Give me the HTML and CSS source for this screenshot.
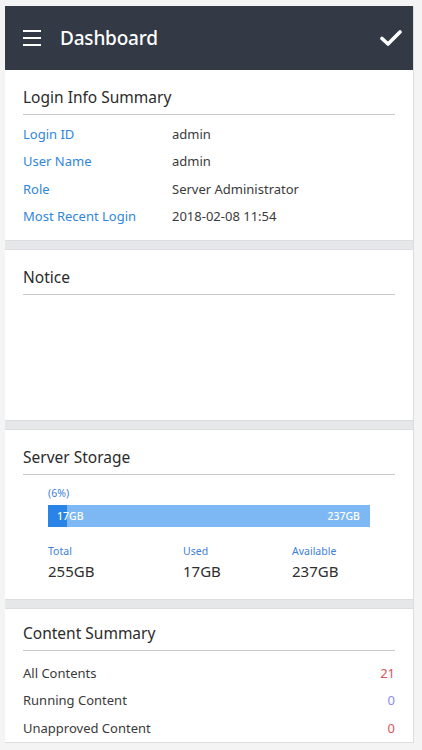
FILE: index.html
```html
<!DOCTYPE html>
<html>
<head>
<meta charset="utf-8">
<link rel="stylesheet" href="styles.css">
</head>
<body>
<div class="app">
  <header class="topbar">
    <div class="hamburger"><span></span><span></span><span></span></div>
    <h1 class="title">Dashboard</h1>
    <svg class="check" width="22" height="18" viewBox="0 0 22 18"><path d="M2 9.5 L8 15 L20 3" fill="none" stroke="#fff" stroke-width="3.6" stroke-linecap="round" stroke-linejoin="round"/></svg>
  </header>
  <main class="cards">
    <section class="card card-login">
      <h2 class="card-title">Login Info Summary</h2>
      <div class="info">
        <div class="info-row"><span class="label">Login ID</span><span class="value">admin</span></div>
        <div class="info-row"><span class="label">User Name</span><span class="value">admin</span></div>
        <div class="info-row"><span class="label">Role</span><span class="value">Server Administrator</span></div>
        <div class="info-row"><span class="label">Most Recent Login</span><span class="value">2018-02-08 11:54</span></div>
      </div>
    </section>
    <section class="card card-notice">
      <h2 class="card-title">Notice</h2>
    </section>
    <section class="card card-storage">
      <h2 class="card-title">Server Storage</h2>
      <div class="storage">
        <div class="pct">(6%)</div>
        <div class="bar">
          <div class="bar-used" style="width:6%"></div>
          <span class="bar-text bar-left">17GB</span>
          <span class="bar-text bar-right">237GB</span>
        </div>
        <div class="stats">
          <div class="stat"><div class="stat-label">Total</div><div class="stat-value">255GB</div></div>
          <div class="stat"><div class="stat-label">Used</div><div class="stat-value">17GB</div></div>
          <div class="stat"><div class="stat-label">Available</div><div class="stat-value">237GB</div></div>
        </div>
      </div>
    </section>
    <section class="card card-content">
      <h2 class="card-title">Content Summary</h2>
      <div class="content-list">
        <div class="content-row"><span>All Contents</span><span class="num red">21</span></div>
        <div class="content-row"><span>Running Content</span><span class="num blue">0</span></div>
        <div class="content-row"><span>Unapproved Content</span><span class="num red">0</span></div>
      </div>
    </section>
  </main>
</div>
</body>
</html>
```

FILE: styles.css
```css
* { box-sizing: border-box; }
html, body {
  margin: 0;
  padding: 0;
  background: #f4f4f5;
  font-family: "Noto Sans", "Open Sans", sans-serif;
  color: #333;
}
.app {
  margin: 6px 8px 0 5px;
  width: 409px;
  border-right: 1px solid #dcdde0;
}
.topbar {
  height: 64px;
  background: #333a45;
  display: flex;
  align-items: center;
  padding: 0 11px 0 18px;
}
.hamburger {
  width: 18px;
  display: flex;
  flex-direction: column;
  gap: 5px;
}
.hamburger span {
  display: block;
  height: 2px;
  background: #fff;
}
.title {
  margin: 0 0 0 19px;
  font-size: 19px;
  font-weight: 500;
  color: #fff;
  flex: 1;
  letter-spacing: -0.2px;
}
.check { display: block; }
.cards {
  display: flex;
  flex-direction: column;
  gap: 8px;
  background: #e6e7e9;
}
.card {
  background: #fff;
  padding: 16px 18px 0 18px;
  border-bottom: 1px solid #dcdde0;
}
.card + .card { border-top: 1px solid #dcdde0; }
.card-title {
  margin: 0;
  font-size: 15.5px;
  font-weight: 400;
  line-height: 22px;
  color: #2b2b2b;
  padding: 0 0 6px 0;
  border-bottom: 1px solid #c8c9cc;
}
.card-login { height: 171px; }
.info { margin-top: 5px; }
.info-row {
  display: flex;
  height: 27.5px;
  align-items: center;
  font-size: 13px;
}
.label { width: 149px; color: #2f86db; }
.value { color: #3a3a3a; }
.card-notice { height: 172px; }
.card-storage { height: 171px; }
.storage { padding: 11px 25px 0 25px; }
.pct {
  font-size: 10.5px;
  color: #3e80d6;
  line-height: 14px;
}
.bar {
  position: relative;
  margin-top: 5px;
  height: 22px;
  width: 322px;
  background: #7db8f5;
  display: flex;
  align-items: center;
  justify-content: space-between;
  padding: 0 10px 0 9px;
}
.bar-used {
  position: absolute;
  left: 0;
  top: 0;
  bottom: 0;
  background: #2a83e6;
}
.bar-text {
  position: relative;
  color: #fff;
  font-size: 10.5px;
  font-weight: 500;
}
.stats {
  display: grid;
  grid-template-columns: 135px 109px 1fr;
  margin-top: 17px;
}
.stat-label {
  font-size: 10.5px;
  color: #3e80d6;
  line-height: 14px;
}
.stat-value {
  font-size: 15px;
  line-height: 26px;
  color: #2e2e2e;
}
.card-content { padding-top: 13px; padding-bottom: 0; }
.content-list { margin-top: 8px; }
.content-row {
  display: flex;
  justify-content: space-between;
  height: 27.5px;
  align-items: center;
  font-size: 13px;
  color: #3a3a3a;
}
.red { color: #e0545a; }
.blue { color: #8a8cf0; }
```
